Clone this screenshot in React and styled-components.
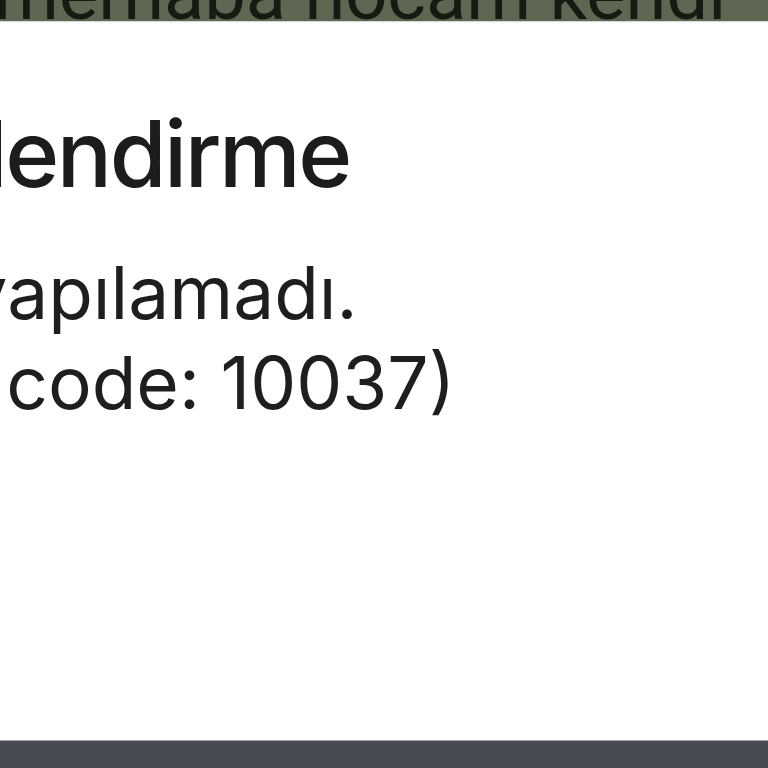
import React from 'react';
import styled, { createGlobalStyle } from 'styled-components';

const Global = createGlobalStyle`
  html, body { margin: 0; padding: 0; background: #ffffff; }
  body { font-family: Inter, "Noto Sans", sans-serif; }
`;

const Screen = styled.div`
  width: 768px;
  height: 768px;
  display: flex;
  flex-direction: column;
  overflow: hidden;
`;

const ChatBar = styled.div`
  height: 21px;
  flex: none;
  background: #5d6751;
  display: flex;
  align-items: flex-end;
  overflow: hidden;
  box-shadow: 0 1px 1px rgba(0, 0, 0, 0.15);
  position: relative;
  z-index: 1;
`;

const ChatText = styled.span`
  font-family: Roboto, "Noto Sans", sans-serif;
  font-size: 74px;
  line-height: 74px;
  color: #151a12;
  white-space: nowrap;
  margin-bottom: -10px;
  margin-left: -6px;
`;

const Dialog = styled.div`
  flex: 1;
  background: #ffffff;
  padding-top: 77px;
`;

const Content = styled.div`
  margin-left: -219px;
  white-space: nowrap;
`;

const Title = styled.h1`
  margin: 0;
  font-size: 92px;
  line-height: 112px;
  font-weight: 500;
  color: #1c1c1c;
  letter-spacing: -2.5px;
`;

const Message = styled.p`
  margin: 38px 0 0 8px;
  font-size: 73px;
  line-height: 90px;
  font-weight: 400;
  color: #1e1e1e;
`;

const NavBar = styled.div`
  height: 27px;
  flex: none;
  background: #474b52;
  border-top: 1px solid #9c9ea1;
`;

export default function App() {
  return (
    <Screen>
      <Global />
      <ChatBar>
        <ChatText>merhaba hocam kendi</ChatText>
      </ChatBar>
      <Dialog>
        <Content>
          <Title>Yetkilendirme</Title>
          <Message>
            Giriş yapılamadı.
            <br />
            (Error code: 10037)
          </Message>
        </Content>
      </Dialog>
      <NavBar />
    </Screen>
  );
}
